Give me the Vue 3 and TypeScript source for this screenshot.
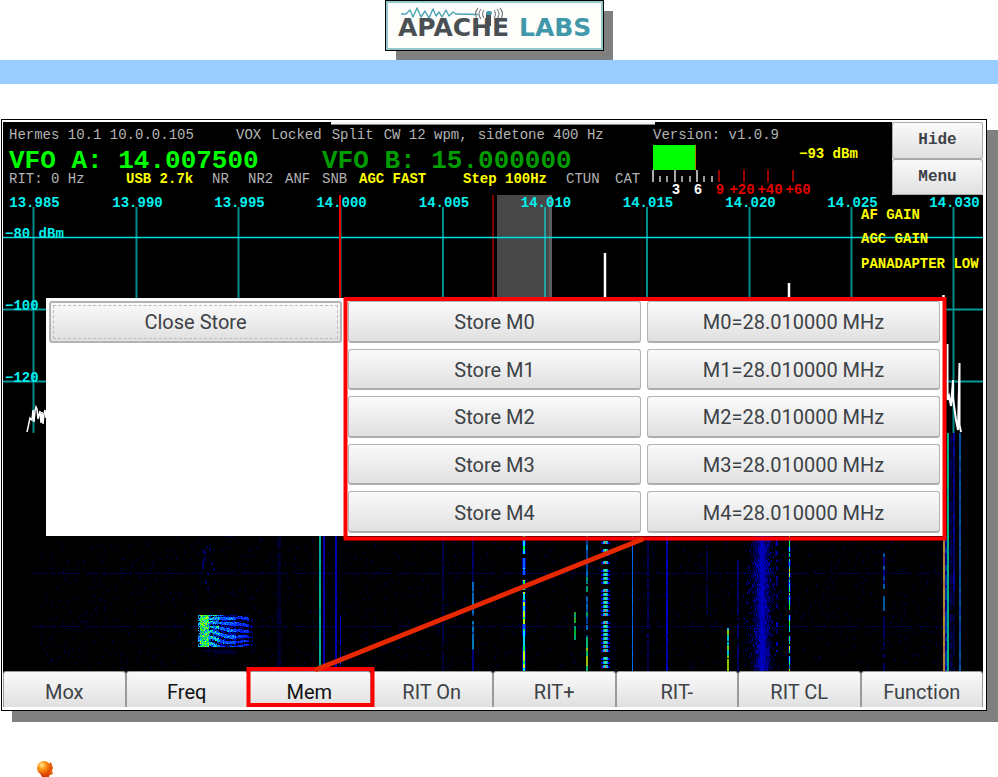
<script setup lang="ts">
import { ref } from 'vue'

interface Segment {
  d: string
  color: string
  width: number
  opacity?: number
}

/* Small deterministic generator so that the waterfall is stable between renders. */
function random(seed: number) {
  let s = seed
  return () => {
    s = (s * 1664525 + 1013904223) >>> 0
    return s / 4294967296
  }
}

/* A vertical carrier in the waterfall, keyed on and off along its length. */
function carrier(x: number, from: number, to: number, width: number, colors: string[], fill: number): Segment[] {
  const next = random(x * 31 + from)
  const paths = new Map<string, string>()
  let y = from
  while (y < to) {
    const len = Math.min(1 + Math.floor(next() * 5), to - y)
    const color = colors[Math.floor(next() * colors.length)]
    if (next() < fill) paths.set(color, (paths.get(color) ?? '') + `M${x} ${y}v${len}`)
    y += len
  }
  return [...paths].map(([color, d]) => ({ d, color, width }))
}

function noise(count: number, seed: number): string {
  const next = random(seed)
  let d = ''
  for (let i = 0; i < count; i++) {
    const x = Math.floor(40 + next() * 905)
    const y = Math.floor(538 + next() * 130)
    d += `M${x}.5 ${y}v${1 + Math.floor(next() * 3)}`
  }
  return d
}

function voiceBurst(): Segment[] {
  const next = random(77)
  const paths = new Map<string, string>()
  for (let y = 615; y < 647; y++) {
    for (let x = 198; x < 253; x++) {
      const bend = Math.sin((x - 198) / 15 + y / 9) * 2.6 + Math.sin((x - 198) / 6) * 0.8
      const wave = Math.sin((y + bend) * 1.3)
      const r = next()
      let color = ''
      if (x < 200) color = r < 0.4 ? '#00b8ff' : r < 0.6 ? '#0050ff' : ''
      else if (x < 209) color = r < 0.45 ? '#20ff20' : r < 0.6 ? '#b8ff00' : r < 0.8 ? '#00e8b0' : '#0070ff'
      else if (x < 219) color = wave > -0.2 ? (r < 0.4 ? '#00d8ff' : r < 0.55 ? '#30ff60' : '#0060ff') : r < 0.7 ? '#0030c0' : ''
      else if (x < 236) color = wave > -0.1 ? (r < 0.3 ? '#00a0ff' : '#0038ff') : r < 0.6 ? '#0000a8' : ''
      else if (x < 249) color = wave > 0 ? (r < 0.8 ? '#0018e0' : '#0058ff') : r < 0.4 ? '#000070' : ''
      else color = wave > 0.3 && r < 0.6 ? '#000098' : ''
      if (color) paths.set(color, (paths.get(color) ?? '') + `M${x} ${y}.5h1`)
    }
  }
  return [...paths].map(([color, d]) => ({ d, color, width: 1 }))
}

/* The strong keyed signal: separate beads, blue outside and hot in the middle. */
function beads(x: number, from: number, to: number): Segment[] {
  const next = random(42)
  let outer = ''
  let inner = ''
  let core = ''
  let hot = ''
  let y = from
  while (y < to) {
    outer += `M${x - 3} ${y + 1}v2M${x + 3} ${y + 1}v2`
    inner += `M${x - 1.5} ${y}v3M${x + 1.5} ${y}v3`
    core += `M${x} ${y}v3`
    if (next() < 0.55) hot += `M${x} ${y + 1}v2`
    y += next() < 0.18 ? 8 : 4
  }
  return [
    { d: outer, color: '#0000d0', width: 3 },
    { d: inner, color: '#00a0ff', width: 2 },
    { d: core, color: '#40f080', width: 2 },
    { d: hot, color: '#ff4060', width: 1 },
  ]
}

function haze(center: number, spread: number, count: number, seed: number): string {
  const next = random(seed)
  let d = ''
  for (let i = 0; i < count; i++) {
    const x = Math.round(center + (next() + next() + next() - 1.5) * spread)
    const y = Math.floor(536 + next() * 133)
    d += `M${x}.5 ${y}v${1 + Math.floor(next() * 3)}`
  }
  return d
}

const frequencies = [
  { x: 33.5, label: '13.985' },
  { x: 136.5, label: '13.990' },
  { x: 238.5, label: '13.995' },
  { x: 340.5, label: '14.000' },
  { x: 443, label: '14.005' },
  { x: 545, label: '14.010' },
  { x: 647, label: '14.015' },
  { x: 749.5, label: '14.020' },
  { x: 851.5, label: '14.025' },
  { x: 953.5, label: '14.030' },
]

const levels = [
  { y: 238, label: '−80 dBm' },
  { y: 310, label: '−100' },
  { y: 382, label: '−120' },
]

const gains = [
  { y: 219, label: 'AF GAIN' },
  { y: 243, label: 'AGC GAIN' },
  { y: 268, label: 'PANADAPTER LOW' },
]

const vivid = ['#00ff40', '#00ff40', '#b8ff00', '#00d8ff', '#0060ff']
const carriers: Segment[] = [
  ...carrier(320, 433, 671, 2, ['#00b496', '#00a8a0'], 1),
  ...carrier(324, 433, 671, 2, ['#0000b0'], 1),
  ...carrier(336, 433, 671, 2, ['#0000b0'], 1),
  ...carrier(340.5, 615, 666, 1, ['#0000d8', '#0058ff', '#0000a0'], 0.9),
  ...carrier(279, 536, 671, 4, ['#00001e', '#000030'], 0.9),
  ...carrier(443, 536, 671, 2, ['#000048', '#000038'], 0.9),
  ...carrier(473, 536, 582, 2, ['#000070', '#000050'], 0.9),
  ...carrier(473, 582, 650, 2, ['#0080b8', '#0068c0', '#003878'], 0.9),
  ...carrier(473, 650, 671, 2, ['#000080'], 0.9),
  ...carrier(524, 536, 671, 4, ['#0000b0'], 0.75),
  ...carrier(524, 536, 671, 2, vivid, 0.9),
  ...carrier(575, 605, 640, 2, ['#00b828', '#30a020', '#00a070'], 0.85),
  ...carrier(587, 536, 571, 2, ['#0080d0', '#0040a0'], 0.7),
  ...carrier(587, 571, 637, 2, ['#00a060', '#0068b8', '#003898'], 0.8),
  ...carrier(587, 637, 671, 2, ['#a0b800', '#00b870', '#d09000'], 0.9),
  ...beads(605.5, 541, 668),
  ...carrier(632.5, 536, 671, 1, ['#0070ff', '#0060e0'], 1),
  ...carrier(648, 536, 671, 2, ['#000058', '#000040'], 0.9),
  ...carrier(667, 536, 671, 2, ['#0000c8', '#0000a0'], 1),
  ...carrier(707, 536, 620, 2, ['#000040'], 0.7),
  ...carrier(738, 560, 671, 2, ['#000070', '#000050'], 0.8),
  ...carrier(728, 626, 671, 2, ['#00d850', '#00b8c8', '#80c800'], 0.85),
  ...carrier(777, 540, 608, 2, ['#0000a0', '#000070'], 0.6),
  ...carrier(777, 622, 667, 2, ['#0000c0', '#000060'], 0.6),
  ...carrier(789.5, 536, 671, 3, ['#000090'], 0.6),
  ...carrier(789.5, 536, 671, 1, vivid, 0.88),
  ...carrier(884, 553, 611, 2, ['#0030a0', '#000080', '#005898'], 0.85),
  ...carrier(884, 611, 671, 2, ['#000058'], 0.6),
  ...carrier(944, 536, 671, 2, ['#b08030', '#a87038', '#b09028'], 1),
  ...carrier(946, 536, 671, 2, ['#0030a8', '#000090'], 1),
  ...carrier(948, 433, 671, 2, ['#00b880', '#00a890'], 1),
  ...carrier(951, 433, 671, 3, ['#000058', '#000030'], 0.95),
  ...carrier(954, 433, 592, 2, ['#0000a0', '#000070'], 1),
  ...carrier(954, 592, 671, 2, ['#000040'], 0.8),
  ...carrier(960, 433, 671, 2, ['#0048a0', '#003c98', '#0058a0'], 1),
]
const burst = voiceBurst()
const softNoise = noise(2400, 5)
const hardNoise = noise(500, 19)
const hazeOuter = haze(762, 16, 700, 3)
const hazeInner = haze(762, 7, 500, 8)

const memories = ref([0, 1, 2, 3, 4].map((id) => ({ id, frequency: '28.010000' })))
const storeOpen = ref(true)

const functions = [
  { label: 'Mox', active: false },
  { label: 'Freq', active: true },
  { label: 'Mem', active: true },
  { label: 'RIT On', active: false },
  { label: 'RIT+', active: false },
  { label: 'RIT-', active: false },
  { label: 'RIT CL', active: false },
  { label: 'Function', active: false },
]

function store(id: number) {
  memories.value[id].frequency = '14.007500'
}
function press(label: string) {
  if (label === 'Mem') storeOpen.value = true
}
</script>

<template>
  <div class="page">
    <header class="top">
      <svg class="logo" viewBox="0 0 213 45" role="img" aria-label="Apache Labs">
        <polyline
          points="13,11 18,11 22,7 25,14 29,5 33,14 37,8 41,15 45,6 48,13 51,9 54,14 58,7 61,13 65,9 68,11 90,11.500"
          fill="none" stroke="#4aa3b3" stroke-width="1.4" stroke-linejoin="round" />
        <g fill="none" stroke="#7d8388" stroke-width="1.2">
          <path d="M96 7q-3 4 0 8M93 6q-4 5 0 10M90 5q-5 6 0 12M106 7q3 4 0 8M109 6q4 5 0 10M112 5q5 6 0 12" />
        </g>
        <rect x="98" y="11" width="5" height="12" fill="#4a4f54" />
        <rect x="98" y="8" width="6" height="4" rx="2" fill="#4198aa" />
        <text x="10" y="33" class="brand dark">APACHE</text>
        <text x="131" y="33" class="brand teal">LABS</text>
      </svg>
    </header>
    <div class="band"></div>

    <main class="frame">
      <div class="screen">
        <section class="status">
          <div class="readout">
            <div class="row info">
              <span>Hermes 10.1 10.0.0.105</span>
              <span class="flags">
                <span>VOX</span><span>Locked</span><span>Split</span><span>CW 12 wpm,</span><span>sidetone 400 Hz</span>
              </span>
            </div>
            <div class="row vfo">
              <span>VFO A: 14.007500</span>
              <span class="vfo-b">VFO B: 15.000000</span>
            </div>
            <div class="row modes">
              <span>RIT: 0 Hz</span>
              <span class="on">USB 2.7k</span>
              <span>NR</span>
              <span>NR2</span>
              <span>ANF</span>
              <span>SNB</span>
              <span class="on">AGC FAST</span>
              <span class="on">Step 100Hz</span>
              <span>CTUN</span>
              <span>CAT</span>
            </div>
          </div>
          <svg class="meter" viewBox="0 0 239 73" role="img" aria-label="Signal meter">
            <text x="0" y="17" class="mono" fill="#b4b4b4">Version: v1.0.9</text>
            <rect x="0" y="23" width="42" height="25" fill="#00ff00" />
            <rect x="42" y="23" width="1" height="25" fill="#b08000" />
            <text x="146" y="36" class="mono small" fill="#ffff00">−93 dBm</text>
            <path d="M0 48v12M22 48v12M44 48v12" stroke="#aaa" stroke-width="2" />
            <path d="M7 54v6M14 54v6M29 54v6M37 54v6M51 54v6M59 54v6" stroke="#999" stroke-width="2" />
            <path d="M66 48v12M91 48v12M115 48v12M140 48v12" stroke="#9c0000" stroke-width="2" />
            <g class="mono small middle">
              <g fill="#fff"><text x="23" y="72">3</text><text x="45" y="72">6</text></g>
              <g fill="#e00000">
                <text x="67" y="72">9</text><text x="89" y="72">+20</text>
                <text x="117" y="72">+40</text><text x="145" y="72">+60</text>
              </g>
            </g>
          </svg>
          <div class="side">
            <button type="button">Hide</button>
            <button type="button">Menu</button>
          </div>
        </section>

        <section class="scope">
          <svg class="plot" viewBox="3 195 980 476" role="img" aria-label="Panadapter and waterfall">
            <defs>
              <linearGradient id="glow">
                <stop offset="0" stop-color="#0000a0" stop-opacity="0" />
                <stop offset="0.350" stop-color="#0000b0" stop-opacity="0.500" />
                <stop offset="0.500" stop-color="#0000e0" stop-opacity="1" />
                <stop offset="0.650" stop-color="#0000b0" stop-opacity="0.500" />
                <stop offset="1" stop-color="#0000a0" stop-opacity="0" />
              </linearGradient>
            </defs>
            <rect x="497" y="195" width="55" height="238" fill="#474747" />
            <rect x="549" y="195" width="3" height="238" fill="#5c5c5c" />
            <rect x="492" y="195" width="2" height="238" fill="#800000" />
            <g stroke="#008b8b" stroke-width="2">
              <line v-for="f in frequencies" :key="f.label" :x1="f.x" :x2="f.x" y1="207" y2="433" />
            </g>
            <path d="M545 207v226" stroke="#20a0a0" stroke-width="2" />
            <path d="M3 237.500h980" stroke="#00e0e0" stroke-width="1.4" />
            <path d="M3 309.500h980M3 381.500h980" stroke="#009898" stroke-width="2" />
            <g class="mono axis middle">
              <text v-for="f in frequencies" :key="f.label" :x="f.x + 1" y="207">{{ f.label }}</text>
            </g>
            <path d="M340 195v238" stroke="#ff0000" stroke-width="2" />
            <g class="mono axis">
              <text v-for="l in levels" :key="l.label" x="5" :y="l.y">{{ l.label }}</text>
            </g>
            <g fill="none" stroke="#fff">
              <path
                d="M27 432L30 418L32 420L33 410L34 422L35 411L36 407L37 409L38 419L40 411L41 423L42 412L43 424L44 414L45 410L46 418"
                stroke-width="1.500" />
              <path d="M605 433V253M789 433V283M943.500 433V295" stroke-width="2.500" />
              <path d="M947.500 344V400L949 396L951 406L953 380V398L956 420L958 430L959.500 363V425L961 432" stroke-width="2" />
            </g>
            <path :d="softNoise" stroke="#000028" stroke-width="1" />
            <path :d="hardNoise" stroke="#000044" stroke-width="1" />
            <path d="M33 573.500h910M33 626.500h910" stroke="#000048" stroke-width="1" stroke-dasharray="14 3 6 2 22 5" />
            <path :d="hazeOuter" stroke="#000060" stroke-width="1" />
            <rect x="751" y="536" width="22" height="135" fill="url(#glow)" />
            <path :d="hazeInner" stroke="#0000b8" stroke-width="1" />
            <path
              d="M204 549v4M205 552v3M204 558v5M203 562v8M205 556v2M207 546v2M210 548v3M212 562v3M208 573v2M206 580v4M214 568v3M208 587v2"
              stroke="#0000c0" stroke-width="1" />
            <path d="M225 536h8M203 651h30M217 653h20" stroke="#000060" stroke-width="1" />
            <path v-for="(s, i) in carriers" :key="'c' + i" :d="s.d" :stroke="s.color" :stroke-width="s.width" />
            <path v-for="(s, i) in burst" :key="'b' + i" :d="s.d" :stroke="s.color" :stroke-width="s.width" />
            <g class="mono small" fill="#ffff00">
              <text v-for="g in gains" :key="g.label" x="861" :y="g.y">{{ g.label }}</text>
            </g>
          </svg>

          <div v-if="storeOpen" class="store" role="dialog" aria-label="Memory store">
            <button type="button" class="key close" @click="storeOpen = false">Close Store</button>
            <template v-for="m in memories" :key="m.id">
              <button type="button" class="key slot" @click="store(m.id)">Store M{{ m.id }}</button>
              <button type="button" class="key">M{{ m.id }}={{ m.frequency }} MHz</button>
            </template>
          </div>
        </section>

        <nav class="functions" aria-label="Functions">
          <button
            v-for="f in functions" :key="f.label" type="button" :class="{ active: f.active }"
            @click="press(f.label)">{{ f.label }}</button>
        </nav>

        <svg class="callout" viewBox="3 122 980 585" aria-hidden="true">
          <g fill="none" stroke="#ff0000" stroke-width="4">
            <rect x="345.500" y="299" width="599" height="239.500" />
            <rect x="248.500" y="669" width="124" height="36" />
          </g>
          <path d="M643 539L315 670" stroke="#e62800" stroke-width="5" />
        </svg>
      </div>
    </main>

    <footer class="foot">
      <svg class="bullet" viewBox="0 0 16 16" aria-hidden="true">
        <defs>
          <radialGradient id="ball" cx="0.350" cy="0.300" r="0.700">
            <stop offset="0" stop-color="#fff0a0" />
            <stop offset="0.350" stop-color="#ffa020" />
            <stop offset="1" stop-color="#e04800" />
          </radialGradient>
        </defs>
        <path d="M9 2L12 3L14 1L15 4L16 7L15 10L16 13L13 14L9 14Z" fill="#e8600c" />
        <ellipse cx="7" cy="7" rx="7" ry="7" fill="url(#ball)" />
        <path d="M3 12L5 16H12L13 12Q8 15 3 12Z" fill="#d83c00" />
      </svg>
    </footer>
  </div>
</template>

<style>
body {
  margin: 0;
  background: #fff;
}
</style>

<style scoped>
.page {
  overflow: hidden;
  font-family: Roboto, "Liberation Sans", sans-serif;
}
.top {
  display: flex;
  justify-content: center;
  align-items: flex-start;
  height: 60px;
  padding-right: 10px;
  overflow: hidden;
}
.logo {
  display: block;
  width: 213px;
  height: 45px;
  border: 2px solid #93c9cb;
  outline: 1px solid #000;
  margin-top: 1px;
  background: #fdfefb;
  box-shadow: 10px 10px 0 #808080;
}
.brand {
  font: bold 25px "DejaVu Sans", sans-serif;
}
.dark {
  fill: #4a4f54;
}
.teal {
  fill: #4198aa;
}
.band {
  height: 24px;
  background: #99ccff;
}
.frame {
  margin: 35px 11px 0 1px;
  padding: 2px 3px 3px 1px;
  border: 1px solid #000;
  background: #fff;
  box-shadow: 11px 11px 0 #808080;
}
.screen {
  position: relative;
  background: #000;
}
.screen::before {
  content: "";
  position: absolute;
  top: 0;
  left: 33.5%;
  right: 33.5%;
  height: 2px;
  background: #f4f4f4;
  border-bottom: 1px solid #888;
}
.status {
  display: grid;
  grid-template-columns: 650fr 239fr 91fr;
  height: 73px;
}
.readout {
  display: flex;
  flex-direction: column;
  padding: 5px 0 0 6px;
  white-space: nowrap;
  color: #b4b4b4;
  font-family: "Liberation Mono", monospace;
  font-size: 14px;
}
.row {
  display: grid;
}
.info {
  grid-template-columns: 227fr 417fr;
  line-height: 16px;
}
.flags {
  display: flex;
  gap: 10px;
}
.vfo {
  grid-template-columns: 313fr 331fr;
  line-height: 26px;
  margin-top: 5px;
  font-size: 26px;
  font-weight: bold;
  color: #00ff00;
}
.vfo-b {
  color: #009c00;
}
.modes {
  grid-template-columns: 117fr 86fr 36fr 37fr 37fr 37fr 104fr 103fr 49fr 38fr;
  line-height: 10px;
}
.on {
  color: #ffff00;
  font-weight: bold;
}
.meter {
  display: block;
  width: 100%;
  height: 73px;
  overflow: visible;
}
.mono {
  font-family: "Liberation Mono", monospace;
  font-size: 14px;
}
.small {
  font-weight: bold;
}
.middle {
  text-anchor: middle;
}
.axis {
  fill: #00f0f0;
  font-weight: bold;
}
.side {
  display: grid;
  grid-template-rows: 1fr 1fr;
  background: #ddd;
}
button {
  margin: 0;
  padding: 0;
  border: 1px solid #aaa;
  border-radius: 3px;
  background: linear-gradient(#fafafa, #e0e0e0);
  color: #3d4247;
  font-family: inherit;
  font-size: 20px;
  cursor: pointer;
}
.side button {
  font: bold 16px "Liberation Mono", monospace;
}
.scope {
  position: relative;
}
.plot {
  display: block;
  width: 100%;
}
.store {
  position: absolute;
  top: 103px;
  bottom: 135px;
  left: 43px;
  right: 40px;
  box-sizing: border-box;
  display: grid;
  grid-template-columns: repeat(3, 1fr);
  grid-template-rows: repeat(5, 1fr);
  gap: 6px;
  padding: 3px;
  background: #fff;
}
.key {
  padding-top: 2px;
  border-color: #b4b4b4;
  border-bottom: 2px solid #adadad;
}
.slot {
  grid-column: 2;
}
.close {
  padding-top: 0;
  border: 2px solid #b4b4b4;
  outline: 1px dashed #bbb;
  outline-offset: -5px;
}
.functions {
  display: grid;
  grid-template-columns: repeat(8, 1fr);
}
.functions button {
  height: 36px;
  padding-top: 5px;
  border-width: 1px 1px 0;
  border-color: #9a9a9a;
  border-radius: 3px 3px 0 0;
}
.functions .active {
  color: #111;
}
.callout {
  position: absolute;
  top: 0;
  left: 0;
  width: 100%;
  pointer-events: none;
}
.foot {
  padding: 50px 0 0 37px;
}
.bullet {
  display: block;
  width: 16px;
  height: 16px;
}
</style>
